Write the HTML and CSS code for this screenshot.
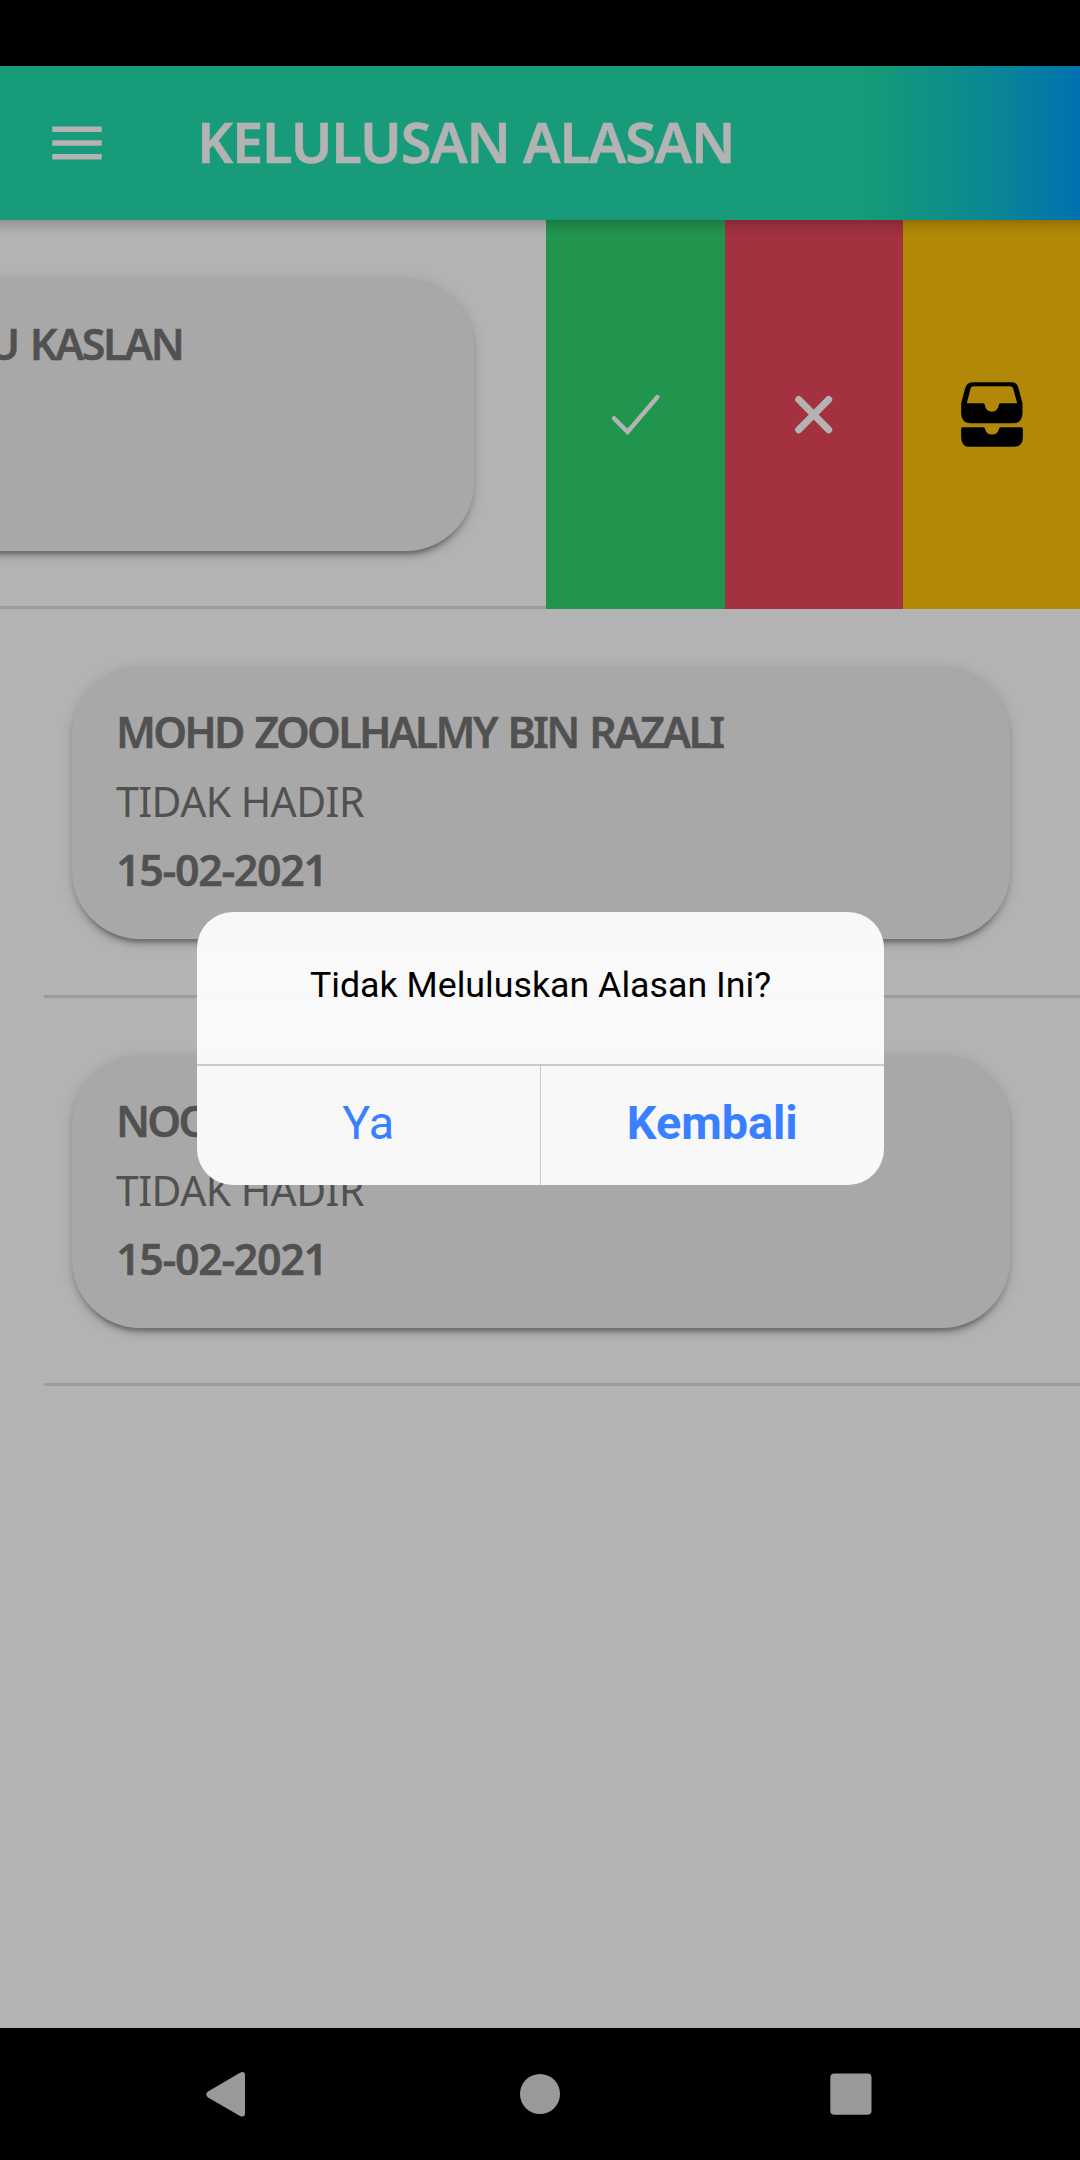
FILE: index.html
```html
<!DOCTYPE html>
<html lang="ms">
<head>
<meta charset="utf-8">
<title>Kelulusan Alasan</title>
<link rel="stylesheet" href="styles.css">
</head>
<body>
<div class="screen">
  <div class="status-bar"></div>
  <header class="toolbar">
    <svg class="menu" viewBox="0 0 24 24"><path d="M3 18h18v-2H3v2zm0-5h18v-2H3v2zm0-7v2h18V6H3z"/></svg>
    <h1 class="title">KELULUSAN ALASAN</h1>
  </header>
  <main class="list">
    <section class="row row-open">
      <div class="item item-slid">
        <div class="card card-slid"><p class="name">U KASLAN</p></div>
      </div>
      <div class="actions">
        <div class="action approve"><svg width="60" height="50" viewBox="0 0 60 50"><path d="M8 28.200 21.500 41.900 51.400 7" fill="none" stroke="#b3b3b3" stroke-width="4.400" stroke-linecap="round"/></svg></div>
        <div class="action reject"><svg width="50" height="50" viewBox="0 0 50 50"><path d="M9.700 9.500 39.700 39.700M39.700 9.500 9.700 39.700" fill="none" stroke="#b3b3b3" stroke-width="7" stroke-linecap="round"/></svg></div>
        <div class="action archive"><svg width="62" height="65" viewBox="63.5 66.5 186 195"><path fill-rule="evenodd" d="M64 130 76 85Q81 67 98 67H215Q232 67 236 85L248 130V162Q246 190 222 190H90Q66 190 64 162ZM81 130 92 86Q94 79 102 79H210Q218 79 220 86L232 130H182Q178 130 177 135A21 21 0 0 1 135 135Q134 130 130 130Z"/><path d="M68 202H131Q135 202 136 208A21 20 0 0 0 177 208Q178 202 182 202H244Q249 202 249 207V235Q247 261 222 261H90Q66 261 64 235V207Q64 202 68 202Z"/></svg></div>
      </div>
    </section>
    <section class="row">
      <div class="item">
        <div class="card">
          <p class="name">MOHD ZOOLHALMY BIN RAZALI</p>
          <p class="reason">TIDAK HADIR</p>
          <p class="date">15-02-2021</p>
        </div>
      </div>
    </section>
    <section class="row">
      <div class="item">
        <div class="card">
          <p class="name">NOORHASHIMAH BINTI OTHMAN</p>
          <p class="reason">TIDAK HADIR</p>
          <p class="date">15-02-2021</p>
        </div>
      </div>
    </section>
  </main>
  <nav class="nav-bar">
    <svg width="40" height="46" viewBox="0 0 40 46"><path d="M2 20.500 34 1.700Q39 -.5 39 4.500V42Q39 47 34 44.900L2 26.500Q-1.500 23.500 2 20.500Z"/></svg>
    <svg width="40" height="42" viewBox="0 0 40 42"><circle cx="20" cy="21" r="20"/></svg>
    <svg width="42" height="42" viewBox="0 0 42 42"><rect x=".3" y=".5" width="41.200" height="41.200" rx="4"/></svg>
  </nav>
  <div class="dialog">
    <p class="message">Tidak Meluluskan Alasan Ini?</p>
    <div class="buttons">
      <button class="btn">Ya</button>
      <button class="btn btn-strong">Kembali</button>
    </div>
  </div>
</div>
</body>
</html>
```
FILE: styles.css
```css
* { box-sizing: border-box; margin: 0; padding: 0; }
body { background: #b3b3b3; font-family: "Noto Sans", sans-serif; }
svg { display: block; flex: none; }

.screen { position: relative; display: flex; flex-direction: column; width: 1080px; height: 2160px; overflow: hidden; }
.status-bar { height: 66px; background: #000; }

.toolbar {
  position: relative; display: flex; align-items: center; gap: 87px;
  height: 154px; padding-left: 44px;
  background: linear-gradient(to right, #179b7a 0, #179b7a 79%, #149a78 81%, #0c8892 91%, #0071b0 100%);
}
.toolbar::after {
  content: ""; position: absolute; left: 0; right: 0; top: 100%; height: 16px; z-index: 2;
  background: linear-gradient(rgba(0,0,0,.18), rgba(0,0,0,.07) 45%, rgba(0,0,0,0));
}
.menu { width: 66px; height: 66px; fill: #b3b3b3; }
.title {
  padding-bottom: 5px; color: #b3b3b3; font-size: 56px; font-weight: 600; line-height: 76px;
  letter-spacing: -1.250px; white-space: nowrap; -webkit-text-stroke: .5px #b3b3b3;
}

.list { flex: 1; }
.row { display: flex; height: 388.500px; padding-left: 44px; }
.row-open { height: 389px; padding-left: 0; }
.item { flex: 1; padding: 57px 70px 0 28px; border-bottom: 3px solid #9c9c9c; }
.item-slid { flex: none; width: 546px; padding: 58px 72px 0 0; overflow: hidden; }
.card {
  height: 273px; padding: 36px 44px 0; border-radius: 68px; background: #a8a8a8; color: #515151;
  box-shadow: 0 8px 3px -5.500px rgba(0,0,0,.2), 0 5.500px 5.500px rgba(0,0,0,.14), 0 3px 14px rgba(0,0,0,.12);
}
.card-slid { margin-left: -80px; padding-left: 68px; }
.name, .date { font-size: 43px; font-weight: 600; line-height: 60px; white-space: nowrap; -webkit-text-stroke: .4px #515151; }
.name { letter-spacing: -2.750px; word-spacing: 3.200px; }
.card-slid .name { letter-spacing: -2.350px; }
.reason { margin-top: 9px; font-size: 41px; line-height: 60px; letter-spacing: -.550px; }
.date { margin-top: 9px; letter-spacing: -1.350px; }

.actions { display: grid; grid-template-columns: 179px 178px 177px; }
.action { display: flex; align-items: center; justify-content: center; }
.approve { background: #21944e; }
.reject { background: #a33140; }
.archive { background: #b28906; }

.nav-bar { display: grid; grid-template-columns: 314px 310px 42px; align-items: center; height: 132px; padding-left: 206px; background: #000; fill: #999; }

.dialog {
  position: absolute; left: 197px; top: 912px; width: 687px; height: 273px; overflow: hidden;
  border-radius: 36px; background: rgba(249,249,249,.993); font-family: Roboto, sans-serif;
}
.message { height: 152px; padding-top: 52px; color: #000; font-size: 35.750px; line-height: 42px; text-align: center; white-space: nowrap; }
.buttons { display: grid; grid-template-columns: 1fr 1fr; height: 121px; border-top: 2px solid #cacaca; }
.btn { border: 0; background: none; color: #3880ff; font: 400 46.750px/60px Roboto, sans-serif; padding-bottom: 6px; }
.btn:first-child { border-right: 1px solid #c8c8c8; }
.btn-strong { font-weight: 700; }
```
